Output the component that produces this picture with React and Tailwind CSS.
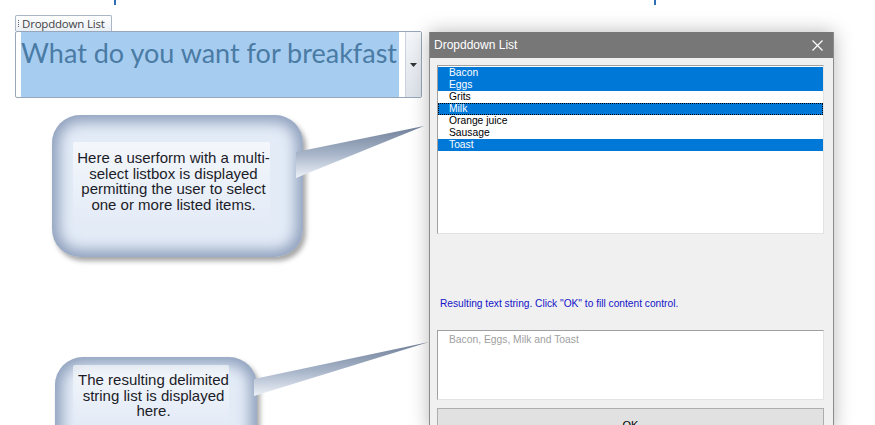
import React from "react";

const items = [
  { label: "Bacon", selected: true },
  { label: "Eggs", selected: true },
  { label: "Grits", selected: false },
  { label: "Milk", selected: true, focused: true },
  { label: "Orange juice", selected: false },
  { label: "Sausage", selected: false },
  { label: "Toast", selected: true },
];

function Callout({ className, children }) {
  return (
    <div
      className={`relative rounded-[28px] bg-[#e3ebf7] shadow-[inset_0_0_14px_7px_#8fa0bd,3px_4px_5px_rgba(0,0,0,0.35)] ${className}`}
    >
      {children}
    </div>
  );
}

function Tails() {
  return (
    <svg className="absolute inset-0 pointer-events-none" width="875" height="425">
      <defs>
        <linearGradient id="tail1" x1="0" y1="0" x2="0" y2="1">
          <stop offset="0" stopColor="#6f7f98" />
          <stop offset="0.55" stopColor="#a9b6ca" />
          <stop offset="1" stopColor="#eef2f8" />
        </linearGradient>
      </defs>
      <polygon points="296,152 424,126 296,178" fill="url(#tail1)" />
      <polygon points="254,379 429,342 254,396" fill="url(#tail1)" />
    </svg>
  );
}

export default function App() {
  return (
    <div className="relative w-[875px] h-[425px] overflow-hidden bg-white font-['Liberation_Sans',sans-serif]">
      {/* descenders of the heading cut off above */}
      <div className="absolute top-0 left-[114px] w-[2px] h-[5px] bg-[#2f6fb6]" />
      <div className="absolute top-0 left-[654px] w-[2px] h-[5px] bg-[#2f6fb6]" />

      <div className="flex">
        <div className="w-[429px] shrink-0 pt-[15px] pl-[15px]">
          {/* content control */}
          <div className="flex items-center h-[16px] w-[97px] border border-b-0 border-[#aab6c6] rounded-t-[2px] bg-gradient-to-b from-white to-[#eaeff5] pl-[2px]">
            <div className="flex flex-col gap-[1px] mr-[3px]">
              <span className="block w-[1px] h-[1px] bg-[#666]" />
              <span className="block w-[1px] h-[1px] bg-[#666]" />
              <span className="block w-[1px] h-[1px] bg-[#666]" />
              <span className="block w-[1px] h-[1px] bg-[#666]" />
            </div>
            <span className="text-[11.5px] leading-none text-[#444] font-['Open_Sans',sans-serif] tracking-[-0.2px]">
              Dropddown List
            </span>
          </div>
          <div className="flex w-[407px] h-[67px] border border-[#97a6ba] rounded-[2px] bg-white">
            <div className="w-[5px]" />
            <div className="w-[378px] bg-[#a6cdf0] pt-[4px] overflow-hidden whitespace-nowrap">
              <span className="text-[27px] leading-[34px] text-[#4a7ba5] font-['Lato',sans-serif]">
                What do you want for breakfast
              </span>
            </div>
            <div className="w-[6px]" />
            <div className="flex-1 flex items-center justify-center border-l border-[#c9d2de] bg-gradient-to-b from-[#f4f6f9] to-[#dde3ea]">
              <svg width="7" height="4" viewBox="0 0 7 4">
                <polygon points="0,0 7,0 3.5,4" fill="#333" />
              </svg>
            </div>
          </div>

          {/* callout 1 */}
          <Callout className="ml-[37px] mt-[17px] w-[251px] h-[142px]">
            <div className="absolute left-[21px] right-[33px] top-[27px] h-[85px] bg-gradient-to-b from-white/60 to-white/0 rounded-[2px]" />
            <div className="relative pt-[35px] pr-[8px] text-center text-[15px] leading-[15.7px] text-[#1c1c28]">
              Here a userform with a multi-
              <br />
              select listbox is displayed
              <br />
              permitting the user to select
              <br />
              one or more listed items.
            </div>
          </Callout>

          {/* callout 2 */}
          <Callout className="ml-[40px] mt-[100px] w-[202px] h-[110px]">
            <div className="absolute left-[18px] right-[28px] top-[8px] h-[60px] bg-gradient-to-b from-white/60 to-white/0 rounded-[2px]" />
            <div className="relative pt-[15px] pr-[5px] text-center text-[15px] leading-[15.7px] text-[#1c1c28]">
              The resulting delimited
              <br />
              string list is displayed
              <br />
              here.
            </div>
          </Callout>
        </div>

        <Tails />

        {/* userform dialog */}
        <div className="relative z-10 mt-[32px] w-[405px] h-[400px] bg-[#f0f0f0] border border-[#8c8c8c] border-t-0 shadow-[0_0_18px_rgba(0,0,0,0.28)]">
          <div className="flex items-center justify-between h-[26px] bg-[#777777] pl-[4px] pr-[10px]">
            <span className="text-[12px] text-white">Dropddown List</span>
            <svg width="11" height="11" viewBox="0 0 11 11">
              <path d="M0.5 0.5 L10.5 10.5 M10.5 0.5 L0.5 10.5" stroke="white" strokeWidth="1.2" />
            </svg>
          </div>

          <div className="pl-[7px] pr-[9px]">
            <div className="mt-[7px] h-[169px] bg-white border-t border-l border-[#a0a0a0] border-r border-b border-r-[#e3e3e3] border-b-[#e3e3e3] pt-[1px]">
              {items.map((it) => (
                <div
                  key={it.label}
                  className={`h-[12px] pl-[11px] text-[10.3px] leading-[12px] ${
                    it.selected ? "bg-[#0078d7] text-white" : "text-black"
                  } ${it.focused ? "outline outline-1 outline-dotted outline-black -outline-offset-1" : ""}`}
                >
                  {it.label}
                </div>
              ))}
            </div>

            <div className="mt-[64px] pl-[3px] text-[10.2px] leading-[12px] text-[#1414c8]">
              Resulting text string. Click "OK" to fill content control.
            </div>

            <div className="mt-[20px] h-[70px] bg-white border-t border-l border-[#a0a0a0] border-r border-b border-r-[#e3e3e3] border-b-[#e3e3e3] pl-[11px] pt-[3px] text-[10.3px] leading-[12px] text-[#a0a0a0]">
              Bacon, Eggs, Milk and Toast
            </div>

            <div className="mt-[8px] h-[30px] bg-[#e1e1e1] border border-[#adadad] flex justify-center pt-[8px] text-[11px] text-black">
              OK
            </div>
          </div>
        </div>
      </div>
    </div>
  );
}
